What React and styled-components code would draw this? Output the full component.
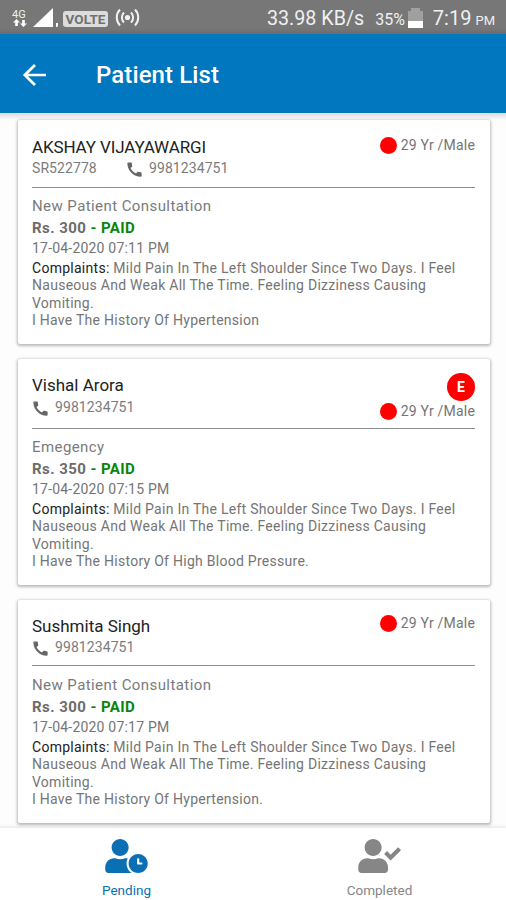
import React from "react";
import styled, { createGlobalStyle } from "styled-components";
import { FaUserClock, FaUserCheck } from "react-icons/fa";
import { MdCall } from "react-icons/md";

const GlobalStyle = createGlobalStyle`
  * { box-sizing: border-box; }
  body { margin: 0; background: #fff; font-family: Roboto, "Liberation Sans", sans-serif; }
`;

const Screen = styled.div`
  display: flex;
  flex-direction: column;
  width: 506px;
  height: 900px;
  overflow: hidden;
  background: #fdfdfd;
`;

const StatusBar = styled.div`
  display: flex;
  justify-content: space-between;
  flex: 0 0 34px;
  padding: 0 11px 0 12px;
  background: #777;
  color: #f0f0f0;
`;

const StatusGroup = styled.div`
  display: flex;
  align-items: center;
  padding-top: 2px;
  white-space: nowrap;
`;

const NetworkType = styled.div`
  width: 16px;
  font-size: 11px;
  line-height: 9px;
  svg { display: block; margin-left: 1px; }
`;

const VolteBadge = styled.span`
  width: 45px;
  height: 16px;
  margin: 2px 7px 0 4px;
  border-radius: 3px;
  background: #dcdcdc;
  color: #707070;
  font-size: 13.5px;
  font-weight: 700;
  line-height: 17px;
  text-align: center;
`;

const StatusText = styled.span`
  font-size: ${(p) => p.$size}px;
  letter-spacing: ${(p) => p.$spacing || 0}px;
  margin-right: ${(p) => p.$gap || 0}px;
  line-height: 24px;
`;

const StatusBaseline = styled.span`
  display: flex;
  align-items: baseline;
  margin-top: ${(p) => p.$top || 0}px;
`;

const AppBar = styled.header`
  display: flex;
  align-items: center;
  flex: 0 0 79px;
  padding: 2px 0 0 22px;
  background: #0077be;
  color: #fff;
  box-shadow: 0 1px 4px 3px rgba(0, 0, 0, 0.12);
  z-index: 1;
`;

const Title = styled.h1`
  margin: 0 0 0 49px;
  font-size: 24px;
  font-weight: 500;
  line-height: 30px;
  letter-spacing: 0.1px;
`;

const List = styled.main`
  display: flex;
  flex-direction: column;
  gap: 15px;
  flex: 0 0 715px;
  padding: 7px 16px 0 18px;
`;

const Card = styled.article`
  flex: none;
  height: ${(p) => p.$height}px;
  padding: 0 15px 0 14px;
  border-radius: 2px;
  background: #fff;
  box-shadow: 0 1px 3px 1px rgba(0, 0, 0, 0.27);
`;

const CardHead = styled.div`
  display: flex;
  justify-content: space-between;
  height: ${(p) => p.$height}px;
  padding-top: ${(p) => p.$top}px;
  border-bottom: 1px solid #8c8c8c;
`;

const Name = styled.h2`
  margin: 0;
  color: #222;
  font-size: 17px;
  font-weight: 400;
  line-height: 21px;
  letter-spacing: ${(p) => p.$spacing}px;
`;

const Contact = styled.div`
  display: flex;
  align-items: center;
  height: ${(p) => p.$height}px;
  color: #7c7c7c;
  font-size: 14px;
  letter-spacing: 0.08px;
  svg { margin: 3px 5px 0 -1px; color: #666; }
`;

const PatientId = styled.span`
  width: 94px;
`;

const Side = styled.div`
  display: flex;
  flex-direction: column;
  align-items: flex-end;
  margin-top: ${(p) => p.$shift}px;
`;

const EmergencyBadge = styled.span`
  width: 28px;
  height: 28px;
  margin: -2px 0 1px;
  border-radius: 50%;
  background: #f00;
  color: #fff;
  font-size: 14px;
  font-weight: 700;
  line-height: 28px;
  text-align: center;
`;

const Demographic = styled.div`
  display: flex;
  align-items: center;
  gap: 4px;
  height: 18px;
  color: #757575;
  font-size: 14px;
  letter-spacing: 0.2px;
`;

const Dot = styled.span`
  width: 17px;
  height: 17px;
  border-radius: 50%;
  background: #f00;
`;

const Visit = styled.div`
  padding-top: ${(p) => p.$top}px;
  color: #7b7b7b;
  font-size: 15px;
  line-height: 21px;
  letter-spacing: 0.42px;
`;

const Fee = styled.div`
  color: #6c6c6c;
  font-size: 15px;
  font-weight: 700;
  line-height: 22px;
  letter-spacing: 0.43px;
`;

const Paid = styled.span`
  color: #0a840a;
`;

const DateTime = styled.div`
  color: #757575;
  font-size: 14px;
  line-height: 19px;
  letter-spacing: 0.2px;
`;

const Complaints = styled.p`
  margin: 0;
  padding-top: 2px;
  color: #757575;
  font-size: 14px;
  line-height: 17.4px;
  letter-spacing: 0.27px;
  white-space: nowrap;
`;

const Label = styled.span`
  color: #222;
`;

const BottomNav = styled.nav`
  display: flex;
  flex: 0 0 72px;
  background: #fff;
  box-shadow: 0 -1px 3px 1px rgba(0, 0, 0, 0.07);
  z-index: 1;
`;

const Tab = styled.div`
  display: flex;
  flex: 1;
  flex-direction: column;
  align-items: center;
  padding-top: 11px;
  color: ${(p) => (p.$active ? "#0b70b3" : "#868686")};
  font-size: 13.5px;
  line-height: 18px;
  svg { margin-bottom: 8px; width: 43px; height: 34px; }
`;

const patients = [
  {
    name: "AKSHAY VIJAYAWARGI", nameSpacing: -0.13, id: "SR522778", visit: "New Patient Consultation",
    fee: "300", date: "17-04-2020 07:11 PM", history: "I Have The History Of Hypertension",
    height: 224, head: 68, headTop: 17, contactHeight: 20, sideShift: -1, visitTop: 8,
  },
  {
    name: "Vishal Arora", nameSpacing: 0, emergency: true, visit: "Emegency",
    fee: "350", date: "17-04-2020 07:15 PM", history: "I Have The History Of High Blood Pressure.",
    height: 226, head: 70, headTop: 16, contactHeight: 21, sideShift: 0, visitTop: 8,
  },
  {
    name: "Sushmita Singh", nameSpacing: 0, visit: "New Patient Consultation",
    fee: "300", date: "17-04-2020 07:17 PM", history: "I Have The History Of Hypertension.",
    height: 223, head: 66, headTop: 16, contactHeight: 20, sideShift: -2, visitTop: 9,
  },
];

function PatientCard({ patient }) {
  return (
    <Card $height={patient.height}>
      <CardHead $height={patient.head} $top={patient.headTop}>
        <div>
          <Name $spacing={patient.nameSpacing}>{patient.name}</Name>
          <Contact $height={patient.contactHeight}>
            {patient.id && <PatientId>{patient.id}</PatientId>}
            <MdCall size={19} />
            <span>9981234751</span>
          </Contact>
        </div>
        <Side $shift={patient.sideShift}>
          {patient.emergency && <EmergencyBadge>E</EmergencyBadge>}
          <Demographic><Dot />29 Yr /Male</Demographic>
        </Side>
      </CardHead>
      <Visit $top={patient.visitTop}>{patient.visit}</Visit>
      <Fee>Rs. {patient.fee} <Paid>- PAID</Paid></Fee>
      <DateTime>{patient.date}</DateTime>
      <Complaints>
        <Label>Complaints:</Label> Mild Pain In The Left Shoulder Since Two Days. I Feel<br />
        Nauseous And Weak All The Time. Feeling Dizziness Causing<br />
        Vomiting.<br />
        {patient.history}
      </Complaints>
    </Card>
  );
}

export default function App() {
  return (
    <>
      <GlobalStyle />
      <Screen>
        <StatusBar>
          <StatusGroup>
            <NetworkType>
              4G
              <svg width="14" height="8" viewBox="0 0 14 8" fill="#fff">
                <path d="M3.5 0 7 3.5H4.8V7H2.2V3.5H0zM10.5 8 7 4.5h2.2V1h2.6v3.5H14z" />
              </svg>
            </NetworkType>
            <svg width="31" height="20" viewBox="0 0 31 20" fill="#fff">
              <path d="M5 19 25 0V19zM28 15h2v3l-1 1h-1z" />
            </svg>
            <VolteBadge>VOLTE</VolteBadge>
            <svg width="26" height="18" viewBox="0 0 26 18" fill="none" stroke="#f2f2f2" strokeWidth="2">
              <circle cx="12.5" cy="8.5" r="2.6" fill="#f2f2f2" stroke="none" />
              <path d="M9 3.5a7 7 0 0 0 0 10M16 3.5a7 7 0 0 1 0 10M5 .5a11.5 11.5 0 0 0 0 16M20 .5a11.5 11.5 0 0 1 0 16" />
            </svg>
          </StatusGroup>
          <StatusGroup>
            <StatusBaseline $top={2}>
              <StatusText $size={19.7} $gap={11}>33.98 KB/s</StatusText>
              <StatusText $size={16} $gap={3}>35%</StatusText>
            </StatusBaseline>
            <svg width="15" height="22" viewBox="0 0 15 22">
              <path d="M3 1h9v3h3v10H0V4h3z" fill="#a0a0a0" />
              <path d="M0 14h15v7H0z" fill="#fff" />
            </svg>
            <StatusBaseline $top={2}>
              <StatusText $size={20} $gap={4}>&nbsp;&nbsp;7:19</StatusText>
              <StatusText $size={13}>PM</StatusText>
            </StatusBaseline>
          </StatusGroup>
        </StatusBar>
        <AppBar>
          <svg width="25" height="24" viewBox="0 0 25 24" fill="none" stroke="#fff" strokeWidth="2.7">
            <path d="M24 12H3M13 2 2.8 12 13 22" />
          </svg>
          <Title>Patient List</Title>
        </AppBar>
        <List>
          {patients.map((patient) => <PatientCard key={patient.name} patient={patient} />)}
        </List>
        <BottomNav>
          <Tab $active><FaUserClock />Pending</Tab>
          <Tab><FaUserCheck />Completed</Tab>
        </BottomNav>
      </Screen>
    </>
  );
}
